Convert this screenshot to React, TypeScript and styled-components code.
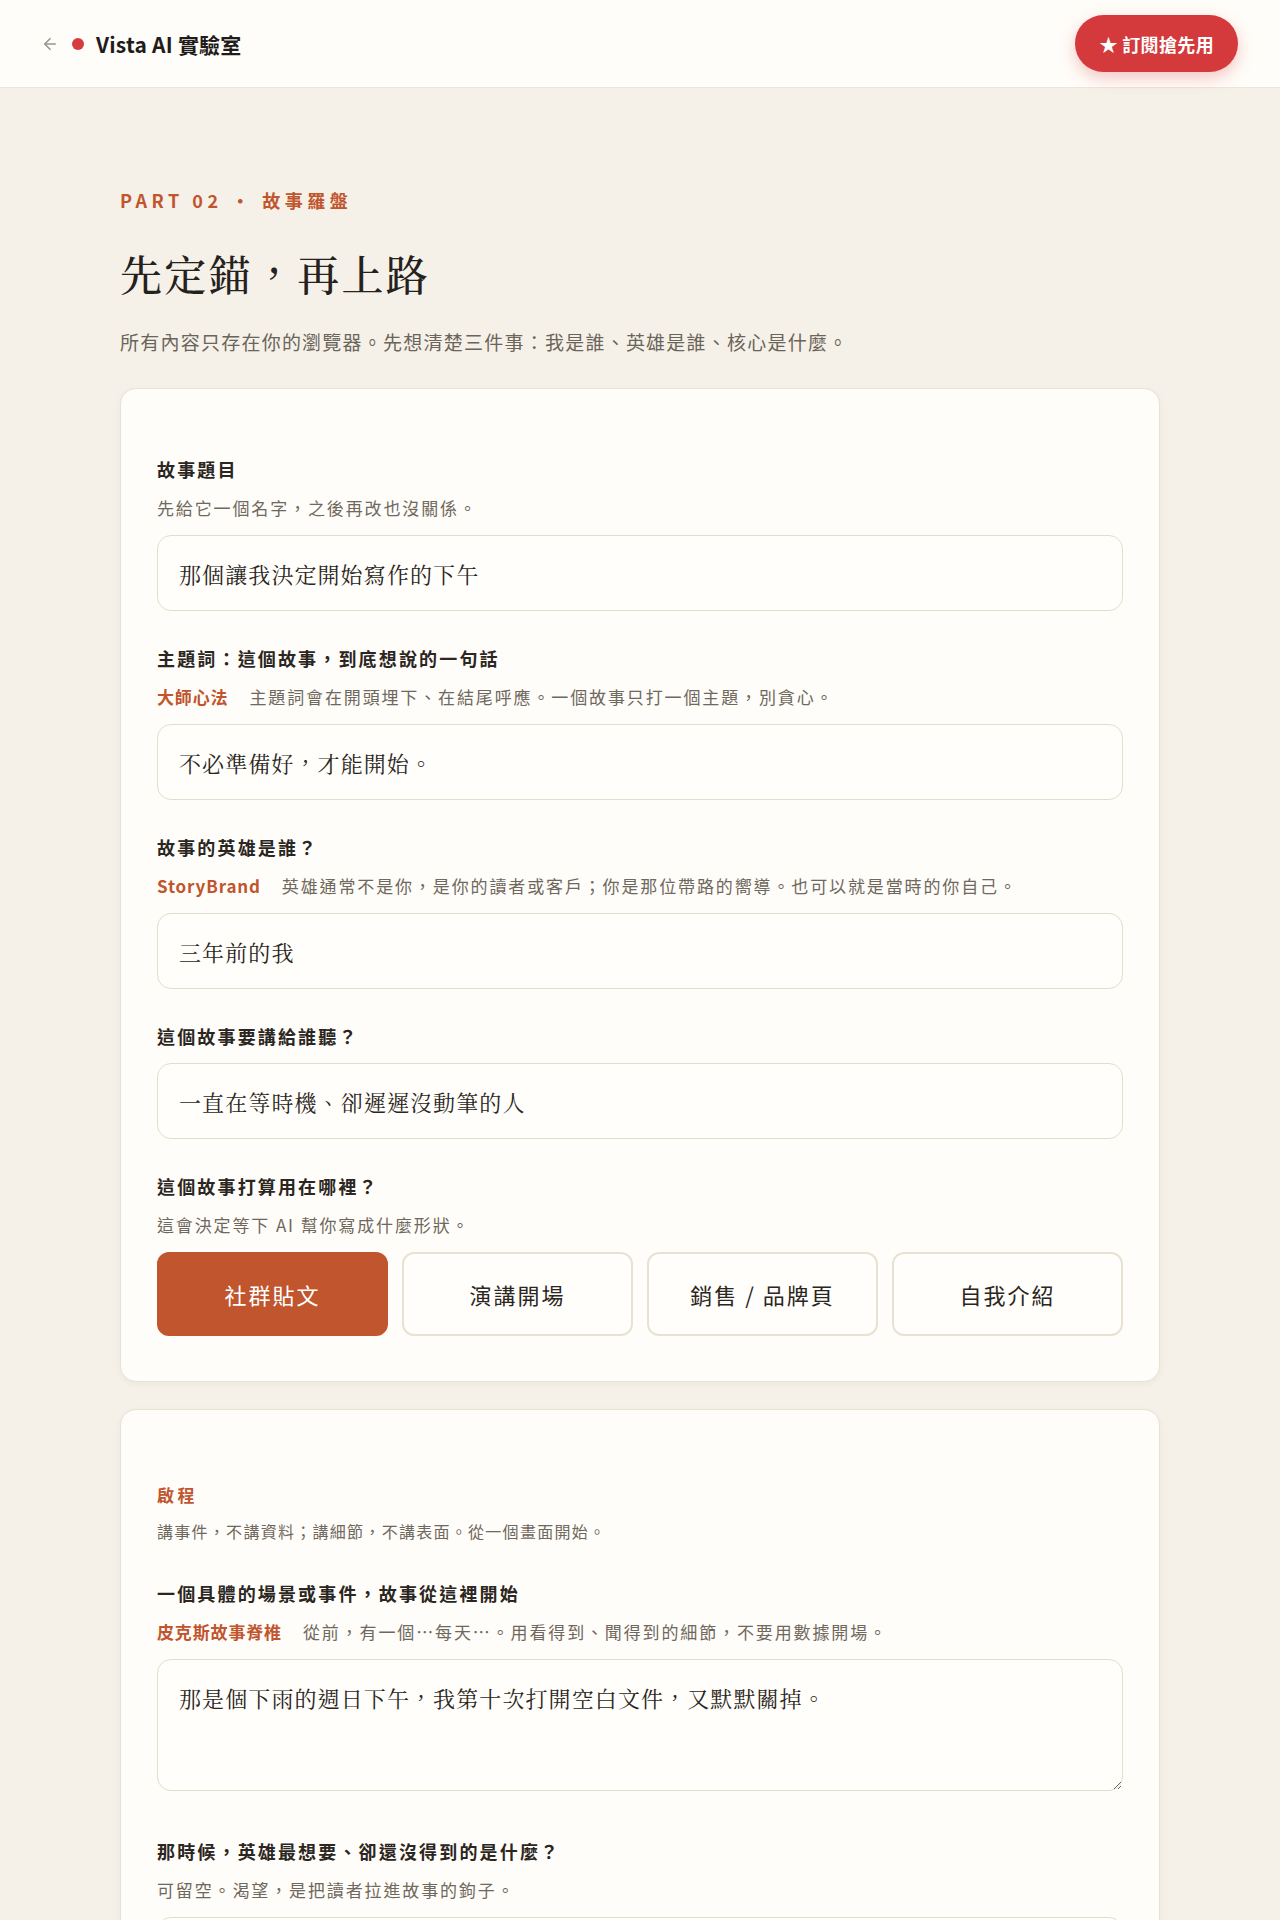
import React, { useState } from "react";
import styled, { createGlobalStyle, css } from "styled-components";

const sans = `"Noto Sans CJK TC", "Noto Sans", "Liberation Sans", sans-serif`;
const serif = `"Noto Serif CJK TC", "Liberation Serif", "Noto Sans CJK TC", serif`;

const Global = createGlobalStyle`
  html, body {
    margin: 0;
    padding: 0;
    background: #f5f1e8;
    font-family: ${sans};
    color: #2b2621;
  }
  * { box-sizing: border-box; }
`;

const Page = styled.div`
  min-height: 1920px;
  background: #f5f1e8;
`;

const Header = styled.header`
  height: 88px;
  background: #fffdf9;
  border-bottom: 1px solid #ece6da;
  display: flex;
  align-items: center;
  justify-content: space-between;
  padding: 0 42px 0 41px;
`;

const BrandRow = styled.div`
  display: flex;
  align-items: center;
`;

const BackLink = styled.a`
  display: flex;
  align-items: center;
  color: #9b968d;
  margin-right: 13px;
  cursor: pointer;
`;

const Dot = styled.span`
  width: 12px;
  height: 12px;
  border-radius: 50%;
  background: #d63b3d;
  margin-right: 12px;
`;

const Brand = styled.span`
  font-size: 21px;
  font-weight: 700;
  color: #1f1c19;
  letter-spacing: 0.01em;
`;

const SubscribeButton = styled.button`
  height: 57px;
  padding: 0 24px;
  border: none;
  border-radius: 29px;
  background: #d4393b;
  color: #fff;
  font-family: ${sans};
  font-size: 18px;
  font-weight: 700;
  letter-spacing: 0.02em;
  display: flex;
  align-items: center;
  gap: 6px;
  box-shadow: 0 6px 16px rgba(212, 57, 59, 0.28);
  cursor: pointer;
`;

const Main = styled.main`
  max-width: 1040px;
  margin: 0 auto;
  padding: 100px 0 40px;
`;

const Eyebrow = styled.div`
  font-size: 18px;
  line-height: 24px;
  font-weight: 700;
  color: #c0552e;
  letter-spacing: 0.25em;
`;

const Title = styled.h1`
  margin: 33px 0 0;
  font-family: ${serif};
  font-size: 42px;
  line-height: 57px;
  font-weight: 500;
  letter-spacing: 0.055em;
  color: #25211d;
`;

const Lead = styled.p`
  margin: 25px 0 0;
  font-size: 19px;
  line-height: 30px;
  color: #6b645a;
  letter-spacing: 0.065em;
`;

const Card = styled.section<{ $top?: number }>`
  margin-top: ${(p) => (p.$top ?? 27)}px;
  background: #fffdf9;
  border: 1px solid #e8e2d5;
  border-radius: 16px;
  box-shadow: 0 2px 6px rgba(80, 60, 30, 0.05);
  padding: 68px 36px 45px;
  display: flex;
  flex-direction: column;
`;

const SectionTitle = styled.div`
  margin-top: 5px;
  font-size: 17px;
  line-height: 24px;
  font-weight: 700;
  color: #c0552e;
  letter-spacing: 0.2em;
`;

const SectionNote = styled.div`
  margin-top: 12px;
  font-size: 16px;
  line-height: 24px;
  color: #6f685d;
  letter-spacing: 0.08em;
`;

const Field = styled.div<{ $gap: number }>`
  margin-top: ${(p) => p.$gap}px;
  display: flex;
  flex-direction: column;
`;

const Label = styled.label`
  font-size: 18px;
  line-height: 24px;
  font-weight: 700;
  color: #2b2621;
  letter-spacing: 0.12em;
`;

const Hint = styled.div`
  margin-top: 15px;
  font-size: 17px;
  line-height: 24px;
  color: #6f685d;
  letter-spacing: 0.11em;
  display: flex;
  align-items: baseline;
`;

const Tag = styled.span`
  color: #c0552e;
  font-weight: 700;
  margin-right: 21px;
  letter-spacing: 0.05em;
`;

const boxBase = css`
  width: 100%;
  margin-top: 15px;
  border: 1.5px solid #e4ddcb;
  border-radius: 14px;
  background: #fffefb;
  font-family: ${serif};
  font-size: 22px;
  color: #2a2520;
  letter-spacing: 0.05em;
  padding: 0 21px;
  outline: none;
`;

const TextInput = styled.input`
  ${boxBase};
  height: 76px;
`;

const TextArea = styled.textarea`
  ${boxBase};
  height: 132px;
  padding-top: 22px;
  line-height: 32px;
  resize: vertical;
  display: block;
`;

const OptionGrid = styled.div`
  margin-top: 15px;
  display: grid;
  grid-template-columns: repeat(4, 1fr);
  gap: 14px;
`;

const OptionButton = styled.button<{ $active: boolean }>`
  height: 84px;
  border-radius: 12px;
  font-family: ${sans};
  font-size: 22px;
  letter-spacing: 0.09em;
  cursor: pointer;
  border: 2px solid ${(p) => (p.$active ? "#c0552e" : "#e8e2d3")};
  background: ${(p) => (p.$active ? "#c0552e" : "#fffefb")};
  color: ${(p) => (p.$active ? "#ffffff" : "#2b2621")};
`;

const ArrowLeft = () => (
  <svg width="18" height="18" viewBox="0 0 24 24" fill="none" stroke="currentColor" strokeWidth="2.2" strokeLinecap="round" strokeLinejoin="round">
    <path d="M19 12H5" />
    <path d="M12 19l-7-7 7-7" />
  </svg>
);

const uses = ["社群貼文", "演講開場", "銷售 / 品牌頁", "自我介紹"];

export default function App() {
  const [use, setUse] = useState(0);
  return (
    <Page>
      <Global />
      <Header>
        <BrandRow>
          <BackLink aria-label="返回">
            <ArrowLeft />
          </BackLink>
          <Dot />
          <Brand>Vista AI 實驗室</Brand>
        </BrandRow>
        <SubscribeButton>★ 訂閱搶先用</SubscribeButton>
      </Header>

      <Main>
        <Eyebrow>PART 02 · 故事羅盤</Eyebrow>
        <Title>先定錨，再上路</Title>
        <Lead>所有內容只存在你的瀏覽器。先想清楚三件事：我是誰、英雄是誰、核心是什麼。</Lead>

        <Card $top={31}>
          <Field $gap={0}>
            <Label>故事題目</Label>
            <Hint>先給它一個名字，之後再改也沒關係。</Hint>
            <TextInput defaultValue="那個讓我決定開始寫作的下午" />
          </Field>

          <Field $gap={35}>
            <Label>主題詞：這個故事，到底想說的一句話</Label>
            <Hint>
              <Tag>大師心法</Tag>主題詞會在開頭埋下、在結尾呼應。一個故事只打一個主題，別貪心。
            </Hint>
            <TextInput defaultValue="不必準備好，才能開始。" />
          </Field>

          <Field $gap={35}>
            <Label>故事的英雄是誰？</Label>
            <Hint>
              <Tag>StoryBrand</Tag>英雄通常不是你，是你的讀者或客戶；你是那位帶路的嚮導。也可以就是當時的你自己。
            </Hint>
            <TextInput defaultValue="三年前的我" />
          </Field>

          <Field $gap={35}>
            <Label>這個故事要講給誰聽？</Label>
            <TextInput defaultValue="一直在等時機、卻遲遲沒動筆的人" />
          </Field>

          <Field $gap={35}>
            <Label>這個故事打算用在哪裡？</Label>
            <Hint>這會決定等下 AI 幫你寫成什麼形狀。</Hint>
            <OptionGrid>
              {uses.map((u, i) => (
                <OptionButton key={u} $active={i === use} onClick={() => setUse(i)}>
                  {u}
                </OptionButton>
              ))}
            </OptionGrid>
          </Field>
        </Card>

        <Card>
          <SectionTitle>啟程</SectionTitle>
          <SectionNote>講事件，不講資料；講細節，不講表面。從一個畫面開始。</SectionNote>

          <Field $gap={38}>
            <Label>一個具體的場景或事件，故事從這裡開始</Label>
            <Hint>
              <Tag>皮克斯故事脊椎</Tag>從前，有一個…每天…。用看得到、聞得到的細節，不要用數據開場。
            </Hint>
            <TextArea defaultValue="那是個下雨的週日下午，我第十次打開空白文件，又默默關掉。" />
          </Field>

          <Field $gap={48}>
            <Label>那時候，英雄最想要、卻還沒得到的是什麼？</Label>
            <Hint>可留空。渴望，是把讀者拉進故事的鉤子。</Hint>
            <TextInput defaultValue="" />
          </Field>
        </Card>
      </Main>
    </Page>
  );
}
